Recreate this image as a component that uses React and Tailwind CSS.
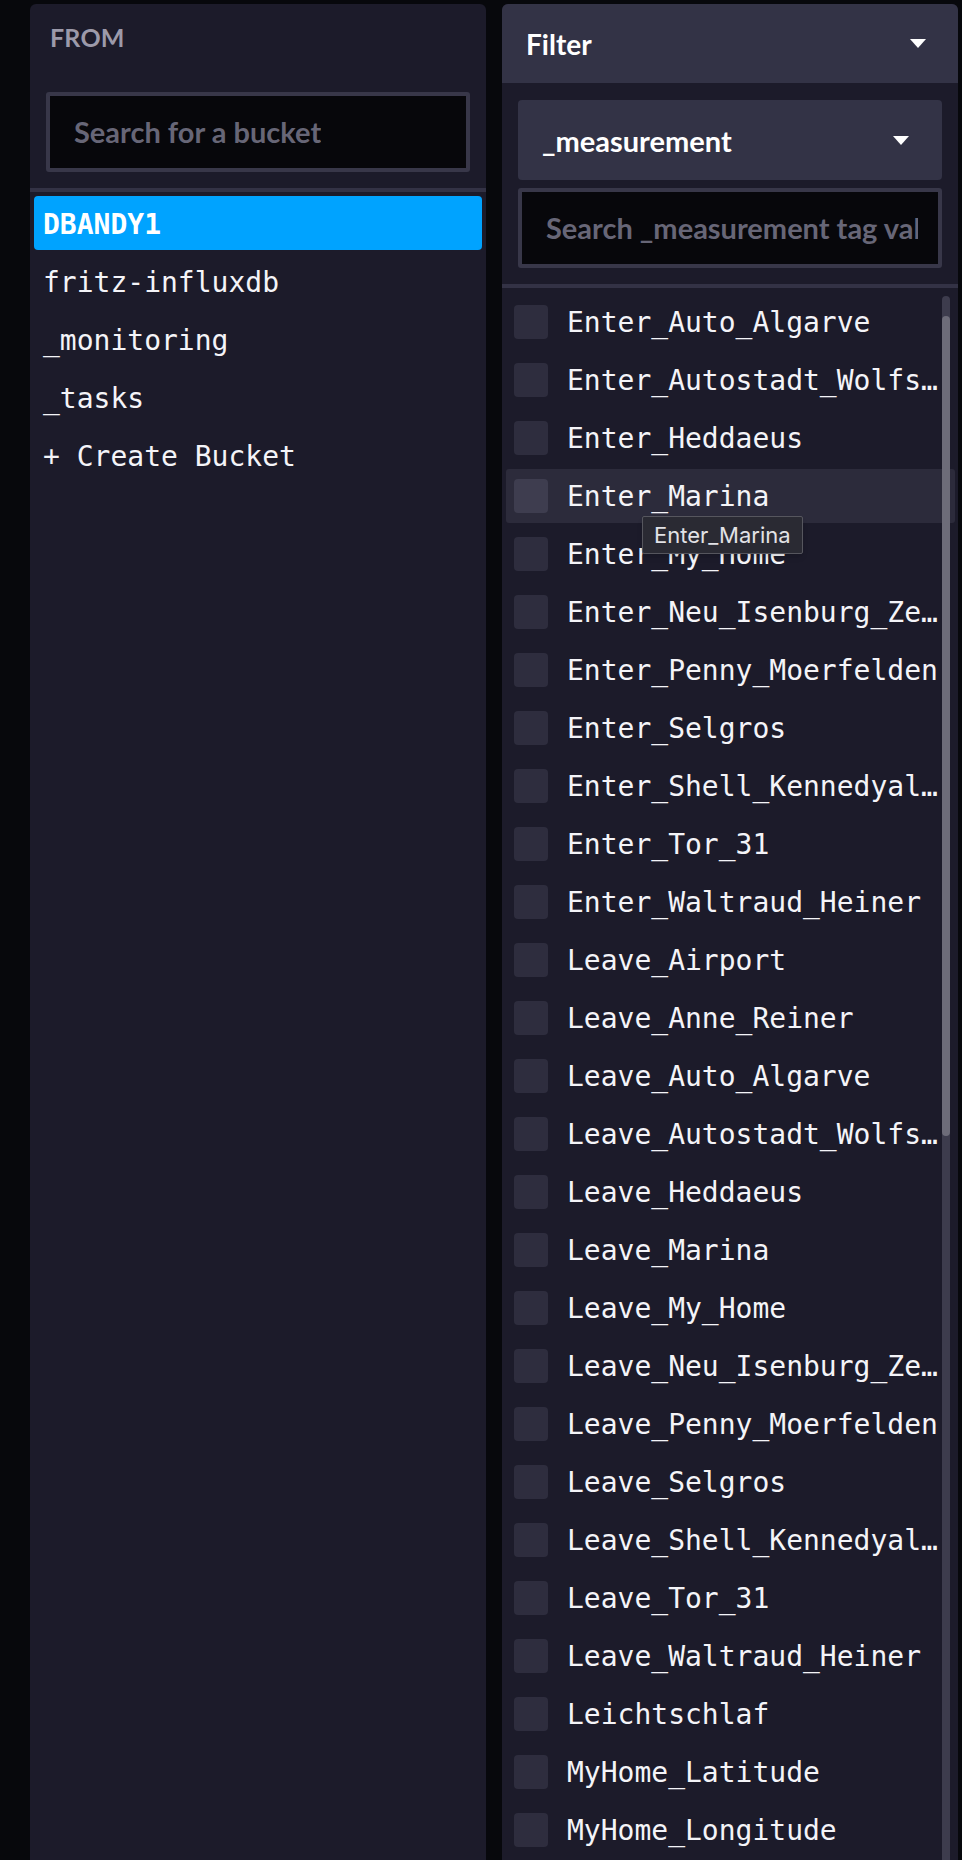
import React from 'react'

const BUCKETS = ['fritz-influxdb', '_monitoring', '_tasks', '+ Create Bucket']

const TAGS = [
  'Enter_Auto_Algarve',
  'Enter_Autostadt_Wolfsburg',
  'Enter_Heddaeus',
  'Enter_Marina',
  'Enter_My_Home',
  'Enter_Neu_Isenburg_Zeppelinheim',
  'Enter_Penny_Moerfelden',
  'Enter_Selgros',
  'Enter_Shell_Kennedyallee',
  'Enter_Tor_31',
  'Enter_Waltraud_Heiner',
  'Leave_Airport',
  'Leave_Anne_Reiner',
  'Leave_Auto_Algarve',
  'Leave_Autostadt_Wolfsburg',
  'Leave_Heddaeus',
  'Leave_Marina',
  'Leave_My_Home',
  'Leave_Neu_Isenburg_Zeppelinheim',
  'Leave_Penny_Moerfelden',
  'Leave_Selgros',
  'Leave_Shell_Kennedyallee',
  'Leave_Tor_31',
  'Leave_Waltraud_Heiner',
  'Leichtschlaf',
  'MyHome_Latitude',
  'MyHome_Longitude',
]

const SANS = "font-['Lato','Open_Sans',sans-serif]"
const MONO = "font-['DejaVu_Sans_Mono','Liberation_Mono',monospace]"

function Caret() {
  return (
    <svg width="16" height="9" viewBox="0 0 16 9" className="shrink-0">
      <polygon points="0,0 16,0 8,9" fill="#ffffff" />
    </svg>
  )
}

function SearchBox({ placeholder }) {
  return (
    <div className="h-[80px] border-4 border-[#383749] bg-[#07070b] rounded-[3px] flex items-center pl-[24px] pr-[20px] overflow-hidden">
      <span className={`${SANS} font-bold text-[29px] leading-[1.4] text-[#676677] whitespace-nowrap overflow-hidden`}>
        {placeholder}
      </span>
    </div>
  )
}

export default function App() {
  return (
    <div className="w-[962px] h-[1860px] bg-[#07080c] overflow-hidden flex pl-[30px] pt-[4px] gap-[16px]">
      {/* FROM */}
      <div className="w-[456px] h-[1900px] bg-[#1c1b2a] rounded-t-[6px] flex flex-col">
        <div className={`${SANS} font-bold text-[25px] leading-none text-[#9c9aaa] pl-[20px] pt-[21px] h-[72px] tracking-[0.2px]`}>
          FROM
        </div>
        <div className="px-[16px] pt-[16px]">
          <SearchBox placeholder="Search for a bucket" />
        </div>
        <div className="h-[4px] bg-[#333245] mt-[16px]" />
        <div className={`${MONO} px-[4px] pt-[4px] flex flex-col gap-[4px] text-[28px] text-[#f4f4f8]`}>
          <div className="h-[54px] rounded-[4px] bg-[#00a3ff] flex items-center pl-[9px] pt-[3px] font-bold text-white">
            DBANDY1
          </div>
          {BUCKETS.map((b) => (
            <div key={b} className="h-[54px] flex items-center pl-[9px] pt-[3px] whitespace-pre">
              {b}
            </div>
          ))}
        </div>
      </div>

      {/* Filter */}
      <div className="w-[456px] h-[1900px] bg-[#1c1b2a] rounded-t-[6px] flex flex-col">
        <div className="h-[79px] bg-[#333346] rounded-t-[6px] flex items-center justify-between pl-[24px] pr-[32px]">
          <span className={`${SANS} font-bold text-[28px] leading-none text-white`}>Filter</span>
          <Caret />
        </div>
        <div className="px-[16px] pt-[17px] flex flex-col gap-[8px]">
          <div className="h-[80px] bg-[#333346] rounded-[4px] flex items-center justify-between pl-[24px] pr-[33px]">
            <span className={`${SANS} font-bold text-[29px] leading-none text-white`}>_measurement</span>
            <Caret />
          </div>
          <SearchBox placeholder="Search _measurement tag values" />
        </div>
        <div className="h-[4px] bg-[#333245] mt-[16px]" />
        <div className="relative flex-1">
          <div className={`${MONO} pl-[4px] pr-[3px] pt-[7px] flex flex-col gap-[4px] text-[28px] text-[#f4f4f8]`}>
            {TAGS.map((t, i) => {
              const hover = i === 3
              return (
                <div
                  key={t}
                  className={`h-[54px] rounded-[3px] flex items-center pl-[8px] ${hover ? 'bg-[#2c2b3b]' : ''}`}
                >
                  <div className={`w-[34px] h-[34px] rounded-[4px] shrink-0 ${hover ? 'bg-[#3e3d4f]' : 'bg-[#2e2d3e]'}`} />
                  <div className="ml-[19px] w-[375px] truncate leading-[1.4] pt-[2px]">{t}</div>
                </div>
              )
            })}
          </div>
          {/* scrollbar */}
          <div className="absolute left-[440px] top-[8px] w-[8px] bottom-0 rounded-t-[4px] bg-[#3d3c4d]">
            <div className="mt-[20px] h-[820px] bg-[#6d6c79] rounded-[4px]" />
          </div>
          {/* tooltip */}
          <div className="absolute left-[140px] top-[228px] h-[38px] px-[11px] flex items-center bg-[#2a2a33] border border-[#56565e] rounded-[2px] shadow-md">
            <span className="font-['Inter',sans-serif] text-[22px] leading-none text-[#e2e2e6]">Enter_Marina</span>
          </div>
        </div>
      </div>
    </div>
  )
}
